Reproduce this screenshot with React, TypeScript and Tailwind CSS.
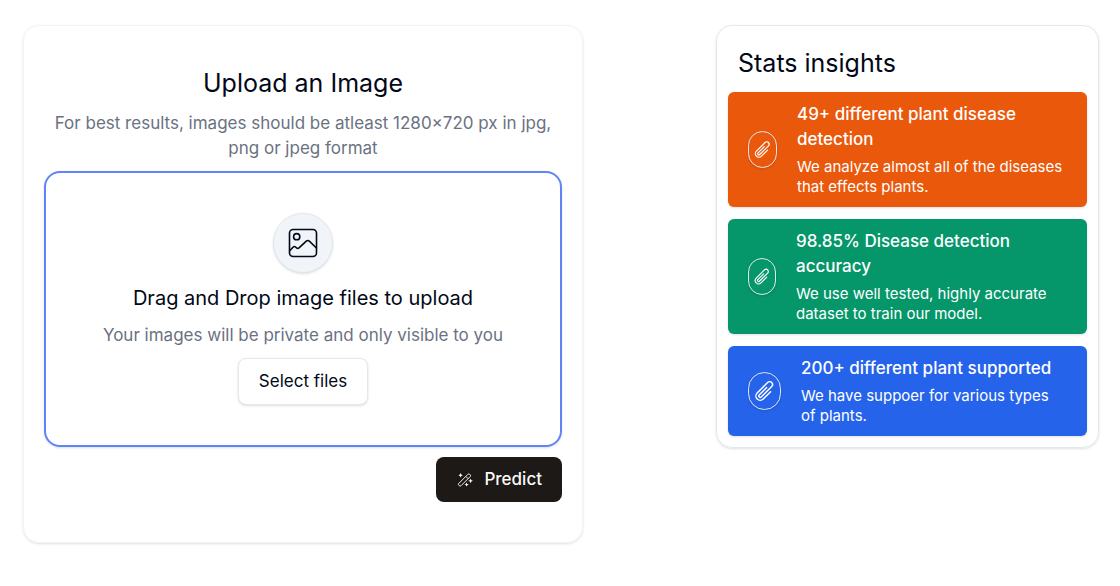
import type { ReactNode } from "react";
import { HiOutlinePaperClip } from "react-icons/hi2";

type StatProps = {
  color: string;
  badge: string;
  title: string;
  children: ReactNode;
};

function PictureIcon() {
  return (
    <svg
      viewBox="0 0 30 30"
      className="size-[30px]"
      fill="none"
      stroke="currentColor"
      strokeWidth="1.6"
      strokeLinecap="round"
      strokeLinejoin="round"
      aria-hidden="true"
    >
      <rect x="1.5" y="1.5" width="27" height="27" rx="3.6" />
      <circle cx="8.7" cy="8.7" r="3.1" />
      <path d="M1.7 22.8 L5 19.2 Q6.4 17.8 7.8 19.2 L8.4 19.8 Q9.6 21 11 19.8 L18.3 13.2 Q19.8 11.8 21.3 13.2 L28.4 20" />
    </svg>
  );
}

function WandIcon() {
  return (
    <svg viewBox="0 0 18 18" className="size-[18px]" fill="none" stroke="currentColor" strokeWidth="0.9" aria-hidden="true">
      <g transform="rotate(-45 8.5 9)">
        <rect x="0.8" y="7.4" width="15.4" height="3.2" rx="1.3" />
        <path d="M12 7.4V10.6" />
      </g>
      <g fill="currentColor" stroke="none">
        <path d="M4.6 2 Q4.9 3.9 6.8 4.2 Q4.9 4.5 4.6 6.4 Q4.3 4.5 2.4 4.2 Q4.3 3.9 4.6 2Z" />
        <path d="M14.6 7.4 Q14.9 9.5 17 9.8 Q14.9 10.1 14.6 12.2 Q14.3 10.1 12.2 9.8 Q14.3 9.5 14.6 7.4Z" />
        <path d="M10.6 11.4 Q10.9 13.2 12.7 13.5 Q10.9 13.8 10.6 15.6 Q10.3 13.8 8.5 13.5 Q10.3 13.2 10.6 11.4Z" />
      </g>
    </svg>
  );
}

function Stat({ color, badge, title, children }: StatProps) {
  return (
    <li className={`flex items-center gap-5 rounded-md px-5 py-[10px] text-white shadow-sm ${color}`}>
      <span className={`flex shrink-0 items-center justify-center rounded-full border border-slate-200 px-1 shadow-sm ${badge}`}>
        <HiOutlinePaperClip className="h-full w-full" aria-hidden="true" />
      </span>
      <div className="flex min-w-0 flex-1 flex-col gap-[5px]">
        <h3 className="text-[17px] font-medium leading-[25px]">{title}</h3>
        <p className="text-[15px] leading-5">{children}</p>
      </div>
    </li>
  );
}

export default function App() {
  return (
    <main className="grid grid-cols-[560fr_383fr] items-start gap-[133px] bg-white pb-10 pl-[23px] pr-[21px] pt-[25px] font-['Inter',sans-serif] text-[#020817]">
      <section className="flex flex-col gap-[10px] rounded-2xl border border-gray-100 px-5 py-10 shadow-sm">
        <h1 className="text-center text-[25px] leading-[35px]">Upload an Image</h1>
        <p className="text-center text-[17px] leading-[25px] text-gray-500">
          For best results, images should be atleast 1280×720 px in jpg, png or jpeg format
        </p>
        <div className="flex flex-col items-center gap-[10px] rounded-2xl border-2 border-[#6183f9] px-5 py-10 text-center shadow-sm">
          <div className="flex size-[60px] items-center justify-center rounded-full border border-slate-200 bg-slate-100 shadow-sm">
            <PictureIcon />
          </div>
          <h2 className="text-[20px] leading-[30px]">Drag and Drop image files to upload</h2>
          <p className="text-[17px] leading-[25px] text-gray-500">
            Your images will be private and only visible to you
          </p>
          <button type="button" className="rounded-lg border border-slate-200 bg-white px-5 py-[10px] text-[17px] leading-[25px] shadow-sm">
            Select files
          </button>
        </div>
        <button type="button" className="flex items-center gap-[10px] self-end rounded-lg bg-[#1c1917] px-5 py-[10px] text-[17px] font-medium leading-[25px] text-stone-50">
          <WandIcon />
          Predict
        </button>
      </section>

      <aside className="rounded-2xl border border-slate-200 px-[11px] pb-[11px] pt-5 shadow-sm">
        <h2 className="px-[10px] text-[25px] leading-[35px]">Stats insights</h2>
        <ul className="mt-[11px] flex flex-col gap-3">
          <Stat color="bg-[#ea580c]" badge="h-[37px] w-[29px]" title="49+ different plant disease detection">
            We analyze almost all of the diseases that effects plants.
          </Stat>
          <Stat color="bg-[#059669]" badge="h-[37px] w-[28px]" title="98.85% Disease detection accuracy">
            We use well tested, highly accurate dataset to train our model.
          </Stat>
          <Stat color="bg-[#2563eb]" badge="h-[38px] w-[33px]" title="200+ different plant supported">
            We have suppoer for various types of plants.
          </Stat>
        </ul>
      </aside>
    </main>
  );
}
